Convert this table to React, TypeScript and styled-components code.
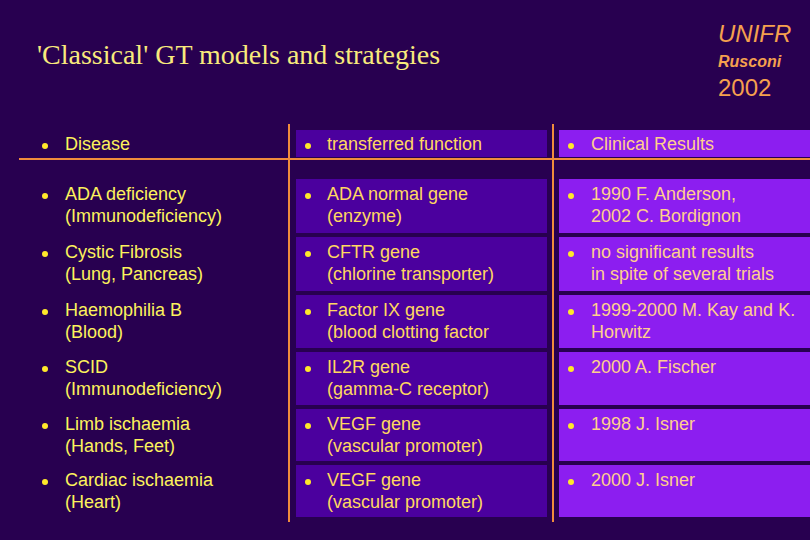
import styled, { createGlobalStyle } from 'styled-components'

const rows = [
  {
    disease: ['ADA deficiency', '(Immunodeficiency)'],
    transfer: ['ADA normal gene', '(enzyme)'],
    result: ['1990 F. Anderson,', '2002 C. Bordignon'],
  },
  {
    disease: ['Cystic Fibrosis', '(Lung, Pancreas)'],
    transfer: ['CFTR gene', '(chlorine transporter)'],
    result: ['no significant results', 'in spite of several trials'],
  },
  {
    disease: ['Haemophilia B', '(Blood)'],
    transfer: ['Factor IX gene', '(blood clotting factor'],
    result: ['1999-2000 M. Kay and K.', 'Horwitz'],
  },
  {
    disease: ['SCID', '(Immunodeficiency)'],
    transfer: ['IL2R gene', '(gamma-C receptor)'],
    result: ['2000 A. Fischer'],
  },
  {
    disease: ['Limb ischaemia', '(Hands, Feet)'],
    transfer: ['VEGF gene', '(vascular promoter)'],
    result: ['1998 J. Isner'],
  },
  {
    disease: ['Cardiac ischaemia', '(Heart)'],
    transfer: ['VEGF gene', '(vascular promoter)'],
    result: ['2000 J. Isner'],
  },
]

type Kind = 'disease' | 'transfer' | 'result'

const Lines = ({ lines }: { lines: string[] }) => (
  <Text>
    {lines.map((l, i) => (
      <span key={i}>
        {i > 0 && <br />}
        {l}
      </span>
    ))}
  </Text>
)

export default function App() {
  const kinds: Kind[] = ['disease', 'transfer', 'result']
  const headers = ['Disease', 'transferred function', 'Clinical Results']
  const colOf = { disease: 1, transfer: 3, result: 5 }
  return (
    <>
      <Global />
      <Slide>
        <Top>
          <Title>'Classical' GT models and strategies</Title>
          <Credit>
            <Uni>UNIFR</Uni>
            <Author>Rusconi</Author>
            <Year>2002</Year>
          </Credit>
        </Top>
        <Table>
          <VLine $col={2} />
          <VLine $col={4} />
          <HLine />
          {kinds.map((k, i) => (
            <Cell key={k} $kind={k} $col={colOf[k]} $row={1} $head>
              <Dot />
              <Lines lines={[headers[i]]} />
            </Cell>
          ))}
          {rows.map((r, ri) =>
            kinds.map((k) => (
              <Cell key={ri + k} $kind={k} $col={colOf[k]} $row={ri + 4}>
                <Dot />
                <Lines lines={r[k]} />
              </Cell>
            ))
          )}
        </Table>
      </Slide>
    </>
  )
}

const Global = createGlobalStyle`
  html, body {
    margin: 0;
    padding: 0;
    background: #280050;
  }
`

const Slide = styled.div`
  width: 810px;
  height: 540px;
  background: #280050;
  overflow: hidden;
  font-family: 'Liberation Sans', Arial, sans-serif;
`

const Top = styled.header`
  height: 124px;
  display: flex;
  justify-content: space-between;
  align-items: flex-start;
  box-sizing: border-box;
  padding-left: 37px;
  padding-right: 20px;
`

const Title = styled.h1`
  margin: 39px 0 0;
  font-family: 'Liberation Serif', 'Times New Roman', serif;
  font-weight: normal;
  font-size: 28px;
  line-height: 32px;
  color: #f8ea7c;
  white-space: nowrap;
`

const Credit = styled.div`
  width: 72px;
  padding-top: 20px;
  display: flex;
  flex-direction: column;
  color: #f5a04e;
`

const Uni = styled.span`
  font-style: italic;
  font-size: 24px;
  line-height: 28px;
`

const Author = styled.span`
  font-style: italic;
  font-weight: bold;
  font-size: 16px;
  line-height: 28px;
`

const Year = styled.span`
  font-size: 24px;
  line-height: 24px;
`

const Table = styled.div`
  margin-left: 19px;
  display: grid;
  grid-template-columns: 269px 2px 262px 2px 256px;
  grid-template-rows: 34px 2px 15px 58px 58px 57px 57px 56px 56px 5px;
`

const VLine = styled.div<{ $col: number }>`
  grid-column: ${(p) => p.$col};
  grid-row: 1 / -1;
  background: #f08c3c;
`

const HLine = styled.div`
  grid-column: 1 / -1;
  grid-row: 2;
  background: #f08c3c;
`

const fills: Record<Kind, string> = {
  disease: 'transparent',
  transfer: '#4b009e',
  result: '#8c1ef0',
}

const inks: Record<Kind, string> = {
  disease: '#fcf25c',
  transfer: '#ffd860',
  result: '#ffcf8c',
}

const Cell = styled.div<{ $kind: Kind; $col: number; $row: number; $head?: boolean }>`
  grid-column: ${(p) => p.$col};
  grid-row: ${(p) => p.$row};
  display: flex;
  align-items: flex-start;
  box-sizing: border-box;
  background: ${(p) => fills[p.$kind]};
  color: ${(p) => inks[p.$kind]};
  margin: ${(p) => (p.$head ? '6px 0 1px' : '4px 0 0')};
  margin-left: ${(p) => (p.$kind === 'transfer' ? '6px' : p.$kind === 'result' ? '5px' : '0')};
  margin-right: ${(p) => (p.$kind === 'transfer' ? '5px' : '0')};
  padding-top: ${(p) => (p.$head ? '3px' : '4px')};
  padding-left: ${(p) => (p.$kind === 'disease' ? '23px' : '9px')};
  gap: ${(p) => (p.$kind === 'transfer' ? '16px' : '17px')};
`

const Dot = styled.span`
  flex: none;
  width: 6px;
  height: 6px;
  margin-top: 10px;
  border-radius: 50%;
  background: #ffe82a;
`

const Text = styled.div`
  font-size: 18px;
  line-height: 22px;
  white-space: nowrap;
`
